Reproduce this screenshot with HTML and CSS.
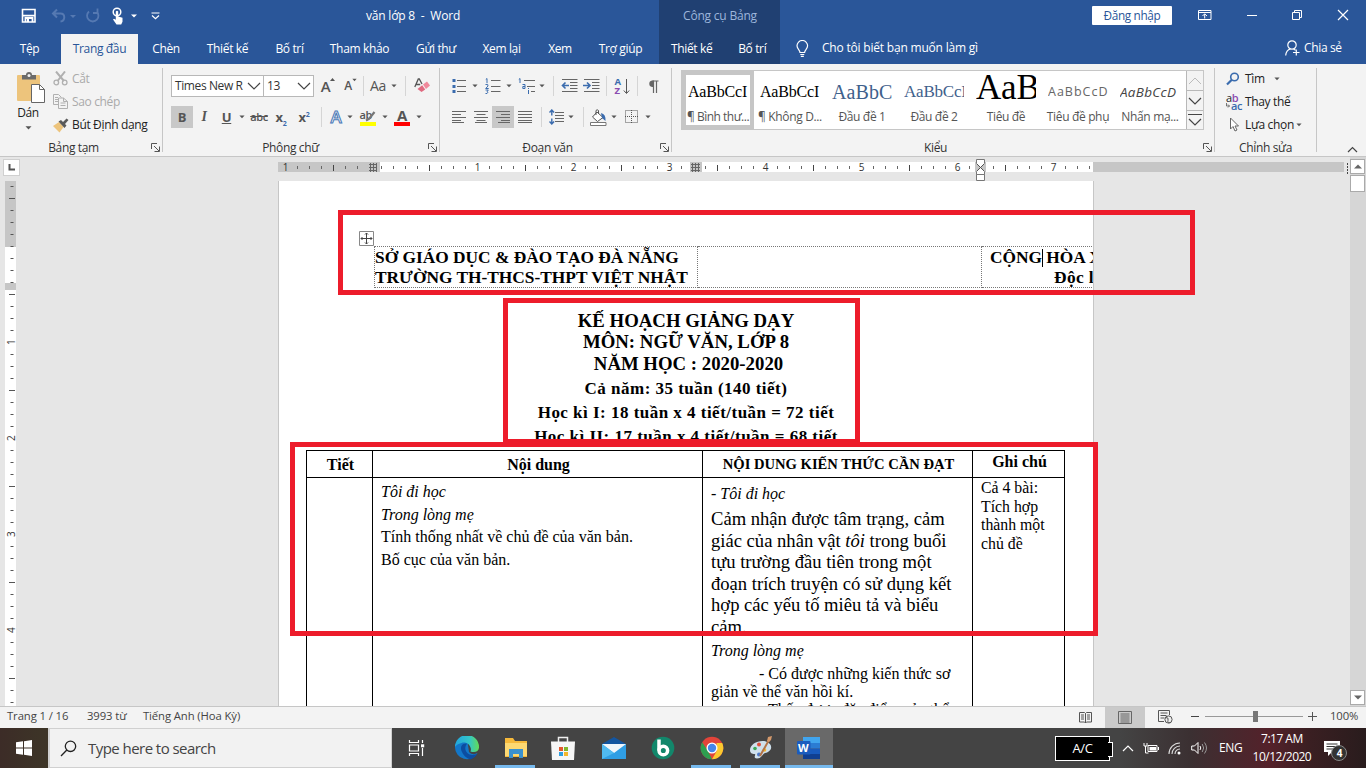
FILE: index.html
```html
<!DOCTYPE html>
<html lang="vi">
<head>
<meta charset="utf-8">
<title>văn lớp 8 - Word</title>
<link rel="stylesheet" href="styles.css">
</head>
<body>
<svg width="0" height="0" class="defs">
  <defs>
    <symbol id="dd" viewBox="0 0 7 4"><path d="M.5 .3h6L3.500 3.600z" fill="#555"/></symbol>
    <symbol id="launch" viewBox="0 0 9 9"><path d="M.5 6V.5H6M3 3l5 5M8.500 3.500v5h-5" fill="none" stroke="#555"/></symbol>
  </defs>
</svg>

<header class="titlebar">
  <div class="quick">
    <svg width="16" height="16" viewBox="0 0 16 16"><path d="M1.500 1.500h12.500v12.500H1.500z" fill="none" stroke="#fff" stroke-width="1.600"/><path d="M2 7.700h12M4.500 14v-4h7v4" fill="none" stroke="#fff" stroke-width="1.800"/><path d="M6 11h2v3H6z" fill="#fff"/></svg>
    <svg width="26" height="16" viewBox="0 0 26 16"><path d="M6 1.500L2 5.500l4 4M2.500 5.500h7c5 0 5 7.500 0 8" fill="none" stroke="#5579b2" stroke-width="2"/><path d="M19 7h6l-3 3z" fill="#5579b2"/></svg>
    <svg width="16" height="16" viewBox="0 0 16 16"><path d="M4 3.500A5.700 5.700 0 1 0 11.500 3.500M12.500 .5v4.500H8" fill="none" stroke="#5579b2" stroke-width="1.800"/></svg>
    <svg width="26" height="18" viewBox="0 0 26 18"><circle cx="6" cy="5" r="3.800" fill="none" stroke="#fff" stroke-width="1.500"/><path d="M4.800 4.500q1.200-1.500 2.400 0v5l4.300 1.300v4l-1.300 2.700H5.500L2 12.500l1-.8 1.800 1z" fill="#fff"/><path d="M20 7.500h6l-3 3z" fill="#fff"/></svg>
    <svg width="9" height="8" viewBox="0 0 9 8"><path d="M.5 1h8M1 3.500l3.500 3.300L8 3.500" fill="none" stroke="#fff" stroke-width="1.200"/></svg>
  </div>
  <div class="doc-title">văn lớp 8&nbsp; -&nbsp; Word</div>
  <div class="context-title">Công cụ Bảng</div>
  <div class="window-tools">
    <span class="login">Đăng nhập</span>
    <svg width="14" height="12" viewBox="0 0 14 12"><path d="M.5 1.500h12.500v9H.5zM.5 3.500h12.500M6.700 9.500V5M4.500 7l2.200-2.200L9 7" fill="none" stroke="#fff"/></svg>
    <svg width="12" height="12" viewBox="0 0 12 12"><path d="M1 6.500h10" stroke="#fff"/></svg>
    <svg width="12" height="12" viewBox="0 0 12 12"><path d="M1.500 3.500h7v7h-7zM3.500 3.500v-2h7v7h-2" fill="none" stroke="#fff"/></svg>
    <svg width="12" height="12" viewBox="0 0 12 12"><path d="M1 1l10 10M11 1L1 11" stroke="#fff" stroke-width="1.200"/></svg>
  </div>
</header>

<nav class="tabs">
  <a>Tệp</a><a class="active">Trang đầu</a><a>Chèn</a><a>Thiết kế</a><a>Bố trí</a><a>Tham khảo</a><a>Gửi thư</a><a>Xem lại</a><a>Xem</a><a>Trợ giúp</a>
  <span class="context-tabs"><a>Thiết kế</a><a>Bố trí</a></span>
  <span class="tell">
    <svg width="13" height="17" viewBox="0 0 13 17"><path d="M4 12.500C4 10 1 9 1 5.800a5.300 5.300 0 0 1 10.600 0C11.600 9 8.600 10 8.600 12.500zM4.300 14.500h4M4.800 16.400h3" fill="none" stroke="#fff" stroke-width="1.200"/></svg>
    Cho tôi biết bạn muốn làm gì</span>
  <span class="share">
    <svg width="15" height="16" viewBox="0 0 15 16"><circle cx="7" cy="5" r="4.200" fill="none" stroke="#fff" stroke-width="1.200"/><path d="M.7 15.500C1 11.500 3 9.500 5.500 9M8.500 9l2 1.200M8 12.500h6.500M11.300 9.500v6" fill="none" stroke="#fff" stroke-width="1.200"/></svg>
    Chia sẻ</span>
</nav>

<section class="ribbon">
  <div class="group clipboard">
    <div class="paste">
      <svg width="29" height="32" viewBox="0 0 29 32"><rect x="0" y="3" width="23" height="26" rx="1" fill="#edc47c"/><path d="M5 3h4a3 3 0 0 1 6 0h4v4.500H5z" fill="#6b6b6b"/><circle cx="12" cy="3.500" r="1.500" fill="#f3f3f3"/><path d="M14.500 12.500h8l5 5V30.500h-13z" fill="#fff" stroke="#666"/><path d="M22.500 12.500v5h5" fill="none" stroke="#666"/></svg>
      <span>Dán</span>
      <svg width="7" height="4"><use href="#dd"/></svg>
    </div>
    <ul class="clip-list">
      <li class="off"><svg width="16" height="15" viewBox="0 0 16 15"><path d="M3 .5l8 9.500M12 .5L4.500 10" stroke="#b0b0b0" stroke-width="2" fill="none"/><circle cx="3.300" cy="11.500" r="2.300" fill="none" stroke="#b0b0b0" stroke-width="1.300"/><circle cx="11.700" cy="11.500" r="2.300" fill="none" stroke="#b0b0b0" stroke-width="1.300"/></svg>Cắt</li>
      <li class="off"><svg width="16" height="15" viewBox="0 0 16 15"><path d="M5 10.500H.5v-10h5l3 3M2 3.500h3M2 5.500h3M2 7.500h3M5.500 4h5l4 3.500v7h-9zM10.500 4v3.500h4M7.500 9h5M7.500 11.500h5" fill="none" stroke="#b0b0b0"/></svg>Sao chép</li>
      <li><svg width="16" height="15" viewBox="0 0 16 15"><path d="M0 8l6-4 4.500 5-4 5.500z" fill="#edc47c"/><path d="M5.500 3.500L8 2l2 2 3.500-3.500L15.500 2 12 6l1.500 1.500-2 2.500z" fill="#5a5a5a"/></svg>Bút Định dạng</li>
    </ul>
    <footer>Bảng tạm</footer><svg class="launcher" width="9" height="9"><use href="#launch"/></svg>
  </div>

  <div class="group font">
    <div class="row row-a">
      <span class="combo face">Times New R<svg width="14" height="8" viewBox="0 0 14 8"><path d="M1 1l6 6 6-6" fill="none" stroke="#444" stroke-width="1.200"/></svg></span>
      <span class="combo size">13<svg width="14" height="8" viewBox="0 0 14 8"><path d="M1 1l6 6 6-6" fill="none" stroke="#444" stroke-width="1.200"/></svg></span>
      <span class="grow">A<svg width="5" height="4" viewBox="0 0 5 4"><path d="M0 3h5L2.500 0z" fill="#555"/></svg></span>
      <span class="shrink">A<svg width="5" height="4"><use href="#dd"/></svg></span>
      <i class="sep"></i>
      <span class="case">Aa</span><svg width="6" height="4"><use href="#dd"/></svg>
      <i class="sep"></i>
      <svg width="17" height="17" viewBox="0 0 17 17"><path d="M.8 9L4.300 1h1L8 6M2.200 6.500h4" fill="none" stroke="#555" stroke-width="1.300"/><path d="M9 6.500L13 3.500 16 7.500 12 11z" fill="#f0899b"/><path d="M8.200 7.200L11.200 11.500 7.500 14 3.500 11z" fill="#e06a80"/></svg>
    </div>
    <div class="row row-b">
      <b class="on">B</b><em>I</em><u>U</u><svg width="6" height="4"><use href="#dd"/></svg>
      <s>abc</s><b class="script">x<sub>2</sub></b><b class="script">x<sup>2</sup></b>
      <i class="sep"></i>
      <span class="effect">A</span><svg width="6" height="4"><use href="#dd"/></svg>
      <span class="mark">ab<svg width="16" height="16" viewBox="0 0 16 16"><path d="M14.500 2L9 9l-3 1.500" stroke="#777" stroke-width="2.200" fill="none"/><path d="M0 12h16v4H0z" fill="#ff0"/></svg></span><svg width="6" height="4"><use href="#dd"/></svg>
      <span class="color">A</span><svg width="6" height="4"><use href="#dd"/></svg>
    </div>
    <footer>Phông chữ</footer><svg class="launcher" width="9" height="9"><use href="#launch"/></svg>
  </div>

  <div class="group para">
    <div class="row row-a">
      <svg width="15" height="16" viewBox="0 0 15 16"><path d="M5 2.500h9M5 8.500h9M5 13.500h9" stroke="#666"/><path d="M.5 1h3v3h-3zM.5 7h3v3h-3zM.5 12h3v3h-3z" fill="#3b6cae"/></svg><svg width="6" height="4"><use href="#dd"/></svg>
      <svg width="16" height="16" viewBox="0 0 16 16"><path d="M6 2.500h9.500M6 8.500h9.500M6 13.500h9.500" stroke="#666"/><path d="M.8 1.500l1.200-1V5M.5 6.500Q3.500 5.500 3 8L.7 10.500h3M.5 12h2.800L2 13.500q2 .5 0 2H.5" fill="none" stroke="#3b6cae"/></svg><svg width="6" height="4"><use href="#dd"/></svg>
      <svg width="17" height="16" viewBox="0 0 17 16"><path d="M6 2.500h11M9 8.500h8M13 13.500h4" stroke="#666"/><path d="M.8 1.500l1.200-1V5M4.500 6.500H7v4H4.800v-2H7M10.500 12v4M10.500 10v1" fill="none" stroke="#3b6cae"/></svg><svg width="6" height="4"><use href="#dd"/></svg>
      <i class="sep"></i>
      <svg width="17" height="14" viewBox="0 0 17 14"><path d="M1 .5h15.500M9 3.500h7.500M9 6.500h7.500M9 9.500h7.500M1 12.500h15.500" stroke="#666"/><path d="M8 6.500H2M4.500 3.500L1.500 6.500l3 3" stroke="#3b6cae" stroke-width="1.600" fill="none"/></svg>
      <svg width="17" height="14" viewBox="0 0 17 14"><path d="M1 .5h15.500M9 3.500h7.500M9 6.500h7.500M9 9.500h7.500M1 12.500h15.500" stroke="#666"/><path d="M0 6.500h6M4 3.500l3 3-3 3" stroke="#3b6cae" stroke-width="1.600" fill="none"/></svg>
      <i class="sep"></i>
      <span class="sort"><span><b class="blue">A</b><b class="violet">Z</b></span><svg width="7" height="17" viewBox="0 0 7 17"><path d="M3.500 1v14M.8 12.500l2.700 3 2.700-3" fill="none" stroke="#555"/></svg></span>
      <i class="sep"></i>
      <svg width="11" height="13" viewBox="0 0 11 13"><path d="M10.500 1H4.500M5.500 1v12M8.500 1v12" stroke="#666" stroke-width="1.200"/><path d="M6 .5H4a3.300 3.300 0 0 0 0 6.500h2z" fill="#666"/></svg>
    </div>
    <div class="row row-b">
      <svg width="22" height="14" viewBox="0 0 22 14"><path d="M4 1.500h14M4 4.500h9M4 7.500h14M4 10.500h9M4 12.500h12" stroke="#666"/></svg>
      <svg width="22" height="14" viewBox="0 0 22 14"><path d="M4 1.500h14M6.500 4.500h9M4 7.500h14M6.500 10.500h9M5 12.500h12" stroke="#666"/></svg>
      <svg class="on" width="22" height="22" viewBox="0 -4 22 22"><path d="M4 1.500h14M9 4.500h9M4 7.500h14M9 10.500h9M6 12.500h12" stroke="#666"/></svg>
      <svg width="22" height="14" viewBox="0 0 22 14"><path d="M4 1.500h14M4 4.500h14M4 7.500h14M4 10.500h14M4 12.500h14" stroke="#666"/></svg>
      <i class="sep"></i>
      <svg width="15" height="16" viewBox="0 0 15 16"><path d="M6 3.500h9M6 6.500h9M6 9.500h9M6 12.500h9" stroke="#666"/><path d="M2.800 6.500V1M.5 3.500L2.800 1l2.300 2.500M2.800 9.500V15M.5 12.500L2.800 15l2.300-2.500" fill="none" stroke="#3b6cae" stroke-width="1.400"/></svg><svg width="6" height="4"><use href="#dd"/></svg>
      <i class="sep"></i>
      <svg width="17" height="17" viewBox="0 0 17 17"><path d="M7 3l6 5.500-5.500 4L2.500 8zM6 6V1.500Q7 0 8.500 1.500V5" fill="#fff" stroke="#555"/><path d="M11 4q5 1 4.500 8L12 9z" fill="#3b6cae"/><path d="M.5 13.500h15.500v3H.5z" fill="#fff" stroke="#777"/></svg><svg width="6" height="4"><use href="#dd"/></svg>
      <svg width="14" height="14" viewBox="0 0 14 14"><path d="M.5 .5h12v12H.5zM6.500 0v13M0 6.500h13" fill="none" stroke="#555" stroke-dasharray="1 1"/></svg><svg width="6" height="4"><use href="#dd"/></svg>
    </div>
    <footer>Đoạn văn</footer><svg class="launcher" width="9" height="9"><use href="#launch"/></svg>
  </div>

  <div class="group styles">
    <div class="gallery">
      <div class="style picked"><p>AaBbCcI</p><span>¶ Bình thư...</span></div>
      <div class="style"><p>AaBbCcI</p><span>¶ Không D...</span></div>
      <div class="style h1"><p>AaBbC</p><span>Đầu đề 1</span></div>
      <div class="style h2"><p>AaBbCcI</p><span>Đầu đề 2</span></div>
      <div class="style title"><p>AaB</p><span>Tiêu đề</span></div>
      <div class="style subtitle"><p>AaBbCcD</p><span>Tiêu đề phụ</span></div>
      <div class="style emph"><p>AaBbCcD</p><span>Nhấn mạ...</span></div>
      <div class="scroller">
        <span><svg width="14" height="8" viewBox="0 0 14 8"><path d="M1 7l6-6 6 6" fill="none" stroke="#bbb"/></svg></span>
        <span><svg width="14" height="8" viewBox="0 0 14 8"><path d="M1 1l6 6 6-6" fill="none" stroke="#444" stroke-width="1.200"/></svg></span>
        <span><svg width="14" height="14" viewBox="0 0 14 14"><path d="M0 1.500h14M1 6l6 6 6-6" fill="none" stroke="#444" stroke-width="1.200"/></svg></span>
      </div>
    </div>
    <footer>Kiểu</footer><svg class="launcher" width="9" height="9"><use href="#launch"/></svg>
  </div>

  <div class="group edit">
    <ul>
      <li><svg width="14" height="14" viewBox="0 0 14 14"><circle cx="8.500" cy="5" r="3.800" fill="none" stroke="#3b6cae" stroke-width="1.600"/><path d="M5.800 7.800L1 12.500" stroke="#3b6cae" stroke-width="2.200"/></svg><span class="find">Tìm</span><svg width="6" height="4"><use href="#dd"/></svg></li>
      <li class="replace"><span class="abac"><span>a<b class="violet">b</b></span><span class="under"><svg width="4" height="5" viewBox="0 0 4 5"><path d="M.5 0v3h3M2 1.500L3.500 3 2 4.500" fill="none" stroke="#555" stroke-width=".8"/></svg><b class="blue">ac</b></span></span><span>Thay thế</span></li>
      <li class="select"><svg width="14" height="15" viewBox="0 0 14 15"><path d="M4.500 1v11l2.500-2.500 2 4.500 2-1-2-4h3.500z" fill="#fff" stroke="#666"/></svg><span>Lựa chọn</span><svg width="6" height="4"><use href="#dd"/></svg></li>
    </ul>
    <footer>Chỉnh sửa</footer>
  </div>
  <svg class="collapse" width="11" height="7" viewBox="0 0 11 7"><path d="M1 6l4.500-4.500L10 6" fill="none" stroke="#444" stroke-width="1.200"/></svg>
</section>

<main class="workspace">
  <aside class="left-rail">
    <div class="corner"><svg width="7" height="7" viewBox="0 0 7 7"><path d="M1.500 0v5.500H7" fill="none" stroke="#555" stroke-width="2"/></svg></div>
    <svg class="vruler" width="11" height="525" viewBox="5 181 11 525">
      <path d="M5 181h11v525H5z" fill="#fff"/><path d="M5 181h11v66H5zM5 283h11v7H5z" fill="#c6c6c6"/>
      <g stroke="#555">
        <path d="M12 181v525" stroke-width="3" stroke-dasharray="1 11" stroke-dashoffset="-5"/>
        <path d="M9 198.500h6M9 294.500h6M9 390.500h6M9 486.500h6M9 582.500h6M9 678.500h6"/>
      </g>
      <g fill="#fff"><path d="M8 336h7v12H8zM8 432h7v12H8zM8 528h7v12H8zM8 624h7v12H8z"/></g>
      <g class="rule-num"><text transform="translate(15 345) rotate(-90)">1</text><text transform="translate(15 441) rotate(-90)">2</text><text transform="translate(15 537) rotate(-90)">3</text><text transform="translate(15 633) rotate(-90)">4</text></g>
    </svg>
  </aside>

  <div class="canvas">
    <svg class="hruler" width="1070" height="24" viewBox="278 157 1070 24">
      <path d="M278 162h1066v10H278z" fill="#c6c6c6"/><path d="M380 162h713v10H380z" fill="#fff"/>
      <path d="M297 167.500h796" stroke="#666" stroke-width="3" stroke-dasharray="1 11"/>
      <path d="M333.500 165v6M429.500 165v6M525.500 165v6M621.500 165v6M717.500 165v6M813.500 165v6M909.500 165v6M1005.500 165v6" stroke="#444"/>
      <g fill="#fff"><path d="M471 163h12v8h-12zM567 163h12v8h-12zM663 163h12v8h-12zM759 163h12v8h-12zM855 163h12v8h-12zM951 163h12v8h-12zM1047 163h12v8h-12z"/></g>
      <g class="rule-num"><text x="285.500" y="171">1</text><text x="477.500" y="171">1</text><text x="573.500" y="171">2</text><text x="669.500" y="171">3</text><text x="765.500" y="171">4</text><text x="861.500" y="171">5</text><text x="957.500" y="171">6</text><text x="1053.500" y="171">7</text></g>
      <path d="M368 162h12v10h-12zM690 162h12v10h-12zM975 162h11v10h-11z" fill="#c6c6c6"/>
      <path d="M369 164.500h8M369 167.500h8M369 170.500h8M370.500 163v9M373.500 163v9M376.500 163v9M691 164.500h9M691 167.500h9M691 170.500h9M692.500 163v9M695.500 163v9M698.500 163v9" stroke="#666"/>
      <path d="M976.500 159.500h8v4l-4 4-4-4zM976.500 174.500v-3l4-4 4 4v3zM976.500 174.500h8v6h-8z" fill="#fff" stroke="#777"/>
      <path d="M977 164l7 7M984 164l-7 7" stroke="#555"/>
      <path d="M1347.500 163v12" stroke="#444" stroke-width="1" stroke-dasharray="2 1"/>
    </svg>

    <article class="page">
      <table class="letterhead">
        <tr><td>SỞ GIÁO DỤC &amp; ĐÀO TẠO ĐÀ NẴNG<br>TRƯỜNG TH-THCS-THPT VIỆT NHẬT</td><td></td><td><p class="nation">CỘNG<i class="caret"></i> HÒA XÃ</p><p class="motto">Độc lập</p></td></tr>
      </table>
      <div class="headings">
        <h1>KẾ HOẠCH GIẢNG DẠY</h1>
        <h1 class="subject">MÔN: NGỮ VĂN, LỚP 8</h1>
        <h1 class="year">NĂM HỌC : 2020-2020</h1>
        <h2 class="total">Cả năm: 35 tuần (140 tiết)</h2>
        <h2>Học kì I: 18 tuần x 4 tiết/tuần = 72 tiết</h2>
        <h2 class="term2">Học kì II: 17 tuần x 4 tiết/tuần = 68 tiết</h2>
      </div>
      <div class="plan">
        <div class="th t1">Tiết</div><div class="th t2">Nội dung</div><div class="th t3">NỘI DUNG KIẾN THỨC CẦN ĐẠT</div><div class="th t4">Ghi chú</div>
        <div></div>
        <div class="lessons"><p><em>Tôi đi học</em></p><p><em>Trong lòng mẹ</em></p><p>Tính thống nhất về chủ đề của văn bản.</p><p>Bố cục của văn bản.</p></div>
        <div class="goals"><p class="lead">- <em>Tôi đi học</em></p>
          <p class="big">Cảm nhận được tâm trạng, cảm<br>giác của nhân vật <em>tôi</em> trong buổi<br>tựu trường đầu tiên trong một<br>đoạn trích truyện có sử dụng kết<br>hợp các yếu tố miêu tả và biểu<br>cảm.</p></div>
        <div class="notes">Cả 4 bài:<br>Tích hợp<br>thành một<br>chủ đề</div>
        <div></div><div></div>
        <div class="goals more"><p><em>Trong lòng mẹ</em></p><p class="indent">- Có được những kiến thức sơ</p><p>giản về thể văn hồi kí.</p><p class="indent">- Thấy được đặc điểm của thể</p></div>
        <div></div>
      </div>
      <svg class="handle" width="15" height="15" viewBox="0 0 15 15"><path d="M.5 .5h14v14H.5z" fill="#fff" stroke="#888"/><path d="M7.500 2v11M2 7.500h11M6 3.500l1.500-1.500L9 3.500M6 11.500L7.500 13 9 11.500M3.500 6L2 7.500 3.500 9M11.500 6L13 7.500 11.500 9" fill="none" stroke="#444"/></svg>
    </article>
    <i class="frame f1"></i><i class="frame f2"></i><i class="frame f3"></i>
  </div>

  <aside class="scrollbar">
    <span class="arrow"><svg width="8" height="5" viewBox="0 0 8 5"><path d="M0 4.500h8L4 .5z" fill="#666"/></svg></span>
    <span class="thumb"></span>
    <span class="arrow end"><svg width="8" height="5" viewBox="0 0 8 5"><path d="M0 .5h8L4 4.500z" fill="#666"/></svg></span>
  </aside>
</main>

<footer class="status">
  <span class="pages">Trang 1 / 16</span><span class="words">3993 từ</span><span class="lang">Tiếng Anh (Hoa Kỳ)</span>
  <span class="view"><svg width="13" height="13" viewBox="0 0 13 13"><path d="M.5 1.500h5l1 1 1-1h5v9.500h-5l-1 1-1-1h-5zM6.500 2.500V12M2 4h3M2 6h3M2 8h3M8 4h3M8 6h3M8 8h3" fill="none" stroke="#555"/></svg></span>
  <span class="view current"><svg width="14" height="13" viewBox="0 0 14 13"><path d="M.5 .5h13v12H.5zM2.500 3h9M2.500 5h9M2.500 7h9M2.500 9h9M2.500 11h9" fill="none" stroke="#666"/></svg></span>
  <span class="view"><svg width="15" height="14" viewBox="0 0 15 14"><path d="M6 11.500H.5V.5h11V5M2.500 3h7M2.500 5.500h6M2.500 8h4" fill="none" stroke="#555"/><circle cx="10.500" cy="9.500" r="3.600" fill="#eee" stroke="#555"/><path d="M8 7.500q3 0 2 3t3 2" fill="none" stroke="#555"/></svg></span>
  <span class="minus"></span><span class="track"><i></i></span><svg class="plus" width="9" height="9" viewBox="0 0 9 9"><path d="M0 4.500h9M4.500 0v9" stroke="#555"/></svg><span class="zoom">100%</span>
</footer>

<footer class="taskbar">
  <span class="start"><svg width="16" height="16" viewBox="0 0 16 16"><path d="M0 2.300l7-1v6.200H0zM8 1.200L16 0v7.500H8zM0 8.500h7v6.200l-7-1zM8 8.500h8V16l-8-1.200z" fill="#fff"/></svg></span>
  <span class="search"><svg width="17" height="17" viewBox="0 0 17 17"><circle cx="10.500" cy="6.300" r="5.200" fill="none" stroke="#222" stroke-width="1.300"/><path d="M6.800 10L1 16" stroke="#222" stroke-width="1.300"/></svg>Type here to search</span>
  <div class="apps">
    <span><svg width="17" height="16" viewBox="0 0 17 16"><path d="M1.500 0v2.500h9V0M1.500 16v-2.500h9V16M1.500 5h9v6h-9zM14.500 0v3M14.500 8v8" fill="none" stroke="#fff" stroke-width="1.200"/><path d="M13 4.300h3.200v3H13z" fill="#fff"/></svg></span>
    <span class="edge"><svg width="24" height="24" viewBox="0 0 24 24"><defs><linearGradient id="eg" x1="0" x2="1"><stop offset="0" stop-color="#22a5dd"/><stop offset=".6" stop-color="#33c6c8"/><stop offset="1" stop-color="#63dc55"/></linearGradient></defs><path d="M0 11C0 5 6 2 12 2l2 14c3 3 6 2.500 8.500 1A12 12 0 0 1 0 11z" fill="#1377c9"/><path d="M0 11A12 12 0 0 1 24 11c.3 4.500-4 6-8.500 4.500 0-1 1-1.500 0-4-1-4-6-6-9-4.500C3 8 .5 9.500 0 11z" fill="url(#eg)"/><path d="M12 7.500c-5-.5-7 3-5.500 7.500 1.500 4 4.500 7 8.500 8.500 3.500-1 6.500-3.500 7.500-6-4 2.500-9 1.500-11-1.500-1.800-2.500-1.700-5.500.5-8.500z" fill="#0c4da0"/></svg></span>
    <span class="run"><svg width="24" height="22" viewBox="0 0 24 22"><path d="M1 1h8l2 3h12v16H1z" fill="#f6b93b"/><path d="M1 6h22v13H1z" fill="#fdd872"/><path d="M5 12h14v9h-4v-4H9v4H5z" fill="#3a91cf"/></svg></span>
    <span><svg width="24" height="24" viewBox="0 0 24 24"><path d="M7.500 6V1.500h9V6" fill="none" stroke="#eee" stroke-width="1.500"/><path d="M0 5.500h24L23 24H1z" fill="#f6f6f6"/><path d="M8 11h4v4H8z" fill="#e2572c"/><path d="M13 11h4v4h-4z" fill="#7fb52c"/><path d="M8 16h4v4H8z" fill="#2f9fe0"/><path d="M13 16h4v4h-4z" fill="#f4b72c"/></svg></span>
    <span class="mail"><svg width="26" height="22" viewBox="0 0 26 22"><path d="M1 7L13 0l12 7v3H1z" fill="#1456a0"/><path d="M1 7h24v15H1z" fill="#2f9ee4"/><path d="M1 7h24L13 16z" fill="#f1f6fa"/><path d="M1 7l12 9L1 22z" fill="#50baf0"/></svg></span>
    <span class="bing"><svg width="24" height="24" viewBox="0 0 24 24"><circle cx="12" cy="12" r="11.300" fill="#12876b"/><path d="M8 3.500v11" fill="none" stroke="#fff" stroke-width="3.500"/><circle cx="12.300" cy="14.500" r="4.300" fill="none" stroke="#fff" stroke-width="3.500"/></svg></span>
    <span class="run chrome"><svg width="24" height="24" viewBox="0 0 24 24"><circle cx="12" cy="12" r="11.300" fill="#e2443a"/><path d="M2.200 6.300L8 15l4 8.300A11.300 11.300 0 0 1 2.200 6.300z" fill="#2d9f50"/><path d="M12 23.300L17 14.500 16.500 7h5.700A11.300 11.300 0 0 1 12 23.300z" fill="#fbc92f"/><circle cx="12" cy="12" r="5.500" fill="#fff"/><circle cx="12" cy="12" r="4.200" fill="#4686ea"/></svg></span>
    <span class="run chrome"><svg width="24" height="24" viewBox="0 0 24 24"><path d="M1 14C1 8 10 3.500 17 5.500c8 3 6 10-1 11.500-3 1-3 5.500-8 5.500S8 18 5.500 18s-4.500-1-4.500-4z" fill="#cfe0ec"/><circle cx="6" cy="12.500" r="1.800" fill="#3aa757"/><circle cx="10" cy="8.500" r="2" fill="#e0503c"/><circle cx="15.500" cy="14" r="1.800" fill="#f4b72c"/><circle cx="10" cy="18.500" r="2" fill="#4b78c9"/><path d="M11 20L20 4" stroke="#b37448" stroke-width="2"/><path d="M18 5l1-4 4-1-1 4-2 2z" fill="#d59a6c"/></svg></span>
    <span class="run focus"><svg width="24" height="24" viewBox="0 0 24 24"><path d="M6 1h17v6H6z" fill="#41a5ee"/><path d="M6 7h17v5.500H6z" fill="#2b7cd3"/><path d="M6 12.500h17V18H6z" fill="#185abd"/><path d="M6 18h17v5H6z" fill="#103f91"/><rect y="5" width="13.500" height="13.500" rx="1" fill="#1b5cbe"/><text class="w" x="1" y="15.500">W</text></svg></span>
  </div>
  <div class="tray">
    <span class="ac">A/C</span>
    <svg width="12" height="8" viewBox="0 0 12 8"><path d="M1 7l5-5 5 5" fill="none" stroke="#fff" stroke-width="1.200"/></svg>
    <svg width="16" height="12" viewBox="0 0 16 12"><path d="M5 3.500h9v6H5zM2.500 6v5h3M1 1v3h3V1M2.500 4v2" fill="none" stroke="#fff"/><path d="M6.500 5H13v3.500H6.500zM15 5h1v3h-1z" fill="#fff"/></svg>
    <svg width="14" height="13" viewBox="0 0 14 13"><path d="M1 12A11 11 0 0 1 12 1M4 12a8 8 0 0 1 8-8M7 12a5 5 0 0 1 5-5" fill="none" stroke="#ddd" stroke-width="1.100"/><circle cx="11" cy="11" r="1.500" fill="#fff"/></svg>
    <svg width="17" height="14" viewBox="0 0 17 14"><path d="M.7 5h2.800L7 1.500v11L3.500 9H.7zM9 5q1.500 2 0 4" fill="none" stroke="#fff"/><path d="M11.200 3q3 4 0 8M13.500 1.500q4 5.500 0 11" fill="none" stroke="#999"/></svg>
    <span class="eng">ENG</span>
    <span class="clock">7:17 AM<br>10/12/2020</span>
    <span class="notice"><svg width="16" height="16" viewBox="0 0 16 16"><path d="M0 1h16v11H8l-4 4v-4H0z" fill="#fff"/><path d="M2.500 4h11M2.500 6.500h11M2.500 9h7" stroke="#333"/></svg><b>4</b></span>
  </div>
</footer>
</body>
</html>
```

FILE: styles.css
```css
* { box-sizing: border-box; }
body { margin: 0; width: 1366px; height: 768px; overflow: hidden; display: flex; flex-direction: column; font: 12px/16px "Open Sans", "Noto Sans", sans-serif; letter-spacing: -.35px; color: #333; background: #e6e6e6; }
p, ul, h1, h2 { margin: 0; padding: 0; }
ul { list-style: none; }
svg { display: block; flex: none; }
.defs { position: absolute; }

.titlebar { height: 32px; flex: none; display: flex; align-items: stretch; background: #2a5699; color: #fff; }
.quick { width: 340px; padding-left: 21px; display: flex; align-items: center; gap: 12px; }
.quick svg:nth-child(2) { margin-left: 2px; }
.quick svg:nth-child(3) { margin-left: -4px; }
.quick svg:nth-child(4) { margin-left: -2px; }
.quick svg:nth-child(5) { margin-left: 2px; }
.doc-title { width: 319px; padding-left: 26px; line-height: 32px; white-space: nowrap; letter-spacing: -.2px; }
.context-title { width: 121px; padding-left: 1px; background: #204072; color: #9db6dc; text-align: center; line-height: 32px; letter-spacing: -.2px; }
.window-tools { flex: 1; display: flex; align-items: center; padding: 0 17px 2px 312px; justify-content: space-between; }
.login { width: 80px; height: 19px; border-radius: 1px; background: #fff; color: #2a5699; text-align: center; line-height: 19px; font-size: 11.800px; margin-right: -8px; }

.tabs { height: 32px; flex: none; display: flex; background: #2a5699; color: #fff; }
.tabs a { line-height: 33px; text-align: center; white-space: nowrap; }
.tabs a:nth-child(1) { width: 61px; padding-right: 2px; }
.tabs a.active { width: 77px; margin-top: 2px; line-height: 30px; background: #f3f3f3; color: #2a5699; }
.tabs a:nth-child(3) { width: 56px; }
.tabs a:nth-child(4) { width: 67px; }
.tabs a:nth-child(5) { width: 57px; }
.tabs a:nth-child(6) { width: 83px; }
.tabs a:nth-child(7) { width: 70px; }
.tabs a:nth-child(8) { width: 61px; }
.tabs a:nth-child(9) { width: 56px; }
.tabs a:nth-child(10) { width: 65px; }
.context-tabs { width: 121px; margin-left: 6px; display: flex; background: #204072; }
.tabs .context-tabs a:nth-child(1) { width: 66px; padding-right: 0; }
.tabs .context-tabs a:nth-child(2) { width: 56px; }
.tell, .share { display: flex; align-items: center; white-space: nowrap; }
.tell { width: 500px; padding-left: 16px; gap: 13px; letter-spacing: -.2px; }
.share { padding-left: 5px; gap: 4px; }

.ribbon { height: 93px; flex: none; display: flex; background: #f3f3f3; border-bottom: 1px solid #c6c6c6; }
.group { position: relative; height: 92px; flex: none; padding-top: 11px; background: linear-gradient(#c6c6c6, #c6c6c6) right 4px / 1px 84px no-repeat; }
.ribbon .group > footer { position: absolute; left: 0; right: 16px; bottom: 0; text-align: center; color: #333; }
.ribbon .para > footer { right: 17px; }
.ribbon .edit > footer { right: 1px; }
.ribbon .font > footer { right: 22px; }
.launcher { position: absolute; right: 3px; bottom: 4px; }
.clipboard { width: 163px; }
.font { width: 277px; }
.para { width: 232px; }
.styles { width: 543px; }
.edit { width: 102px; }
.clipboard { display: flex; padding-top: 0; }
.font > footer { padding-left: 0; }
.paste { width: 48px; padding: 8px 0 0 8px; display: flex; flex-direction: column; align-items: center; }
.paste > svg:first-child { margin-left: 6px; }
.paste span { color: #222; margin: 1px 0 5px; }
.clip-list { padding-top: 3px; }
.clip-list li { height: 23.300px; display: flex; align-items: center; gap: 3px; padding-left: 5px; color: #222; white-space: nowrap; }
.clip-list .off { color: #aaa; }

.row { display: grid; align-items: center; justify-items: center; height: 22px; color: #555; }
.row-b { margin-top: 9px; }
.font .row { padding-left: 8px; }
.font .row-a { grid-template-columns: 93px 50px 28px 17px 8px 22px 10px 12px 22px; }
.font .row-b { grid-template-columns: 22px 22px 23px 7px 28px 16px 30px 5px 24px 3px 33px 2px 32px 2px; }
.para .row-a { padding-left: 11px; grid-template-columns: 16px 16px 19px 14px 20px 11px 12px 20px 24px 6px 26px 4px 28px; }
.para .row-b { padding-left: 8px; grid-template-columns: 22px 22px 22px 22px 10px 20px 10px 14px 16px 16px 19px 14px; }
.sep { width: 1px; height: 20px; background: #d5d5d5; }
.combo { width: 100%; height: 22px; border: 1px solid #b8b8b8; background: #fff; color: #333; display: flex; align-items: center; justify-content: space-between; padding: 0 3px; white-space: nowrap; }
.combo.size { border-left-width: 0; padding-right: 2px; }
.combo.face { letter-spacing: -.4px; padding-right: 2px; }
.grow, .shrink { display: flex; align-items: flex-start; font-size: 15px; font-weight: 600; }
.shrink { font-size: 12px; }
.case { font-size: 14px; }
.row-b > .on { width: 22px; height: 22px; background: #c8c8c8; text-align: center; line-height: 22px; font-size: 13px; }
.para .row-b > .on { background: #c8c8c8; }
.row-b > em { font: italic bold 14px "Liberation Serif", serif; }
.row-b > u { font-size: 13px; font-weight: 700; }
.row-b > s { font-size: 11px; font-weight: 600; }
.script { font-size: 13px; line-height: 16px; }
.script sub, .script sup { font-size: 7px; line-height: 0; color: #3b6cae; }
.effect { font-size: 17px; font-weight: 600; color: #f3f3f3; -webkit-text-stroke: 1px #4878b8; }
.mark { position: relative; width: 16px; height: 17px; font-size: 11px; line-height: 11px; font-weight: 600; }
.mark svg { position: absolute; left: 0; top: 1px; }
.color { width: 16px; height: 17px; font-size: 15px; line-height: 13px; font-weight: 700; text-align: center; border-bottom: 4px solid #f00; }
.sort { display: flex; align-items: center; gap: 2px; font-size: 9.500px; line-height: 9px; }
.sort b { display: block; }

.ribbon .styles { padding: 6px 0 0 9px; }
.gallery { width: 523px; height: 60px; display: flex; border: 1px solid #c6c6c6; background: #fff; }
.style { width: 72px; flex: none; text-align: center; overflow: hidden; color: #555; white-space: nowrap; }
.style p { height: 38px; color: #000; font: 16px/42px "Liberation Serif", serif; letter-spacing: -.2px; padding: 0; margin: 0 6px; overflow: hidden; display: flex; }
.picked { box-shadow: inset 0 0 0 4px #c6c6c6; }
.picked span { letter-spacing: -.5px; }
.style.h1 p { font-size: 20px; color: #3f618c; letter-spacing: .1px; }
.style.h2 p { font-size: 17px; color: #3f618c; letter-spacing: -.2px; }
.style.title p { font-size: 35px; line-height: 33px; letter-spacing: -.2px; }
.style.subtitle p { font: 12.500px/42px "Open Sans", sans-serif; color: #666; letter-spacing: 1px; }
.style.emph p { font: italic 13.500px/42px "Open Sans", sans-serif; color: #444; letter-spacing: .3px; margin-right: 4px; }
.style > span { display: block; }
.scroller { width: 17px; flex: none; display: grid; grid-template-rows: 20px 20px 18px; }
.scroller span { display: grid; place-items: center; background: #f3f3f3; border: solid #b8b8b8; border-width: 0 0 1px 1px; }
.scroller span:last-child { border-bottom: 0; }
.edit ul { padding-left: 11px; margin-top: -8px; }
.edit li { height: 23px; display: flex; align-items: center; gap: 5px; color: #222; white-space: nowrap; }
.edit .find { margin-right: 4px; }
.edit .replace { gap: 3px; }
.edit .select { gap: 5px; }
.edit .select svg:last-child { margin-left: -3px; }
.abac { width: 16px; font-size: 11px; line-height: 8px; letter-spacing: -.4px; display: flex; flex-direction: column; }
.abac b { font-weight: 600; }
.under { display: flex; align-items: center; gap: 1px; }
.violet { color: #8a4bb0; }
.blue { color: #3b6cae; }
.collapse { margin: 82px 0 0 30px; }

.workspace { height: 549px; flex: none; display: flex; background: #e6e6e6; overflow: hidden; }
.left-rail { width: 278px; flex: none; }
.corner { width: 17px; height: 17px; margin: 2px 0 5px 3px; background: #fff; border: 1px solid #d0d0d0; display: grid; place-items: center; }
.vruler { margin-left: 5px; }
.rule-num text { font: 10px "Open Sans", sans-serif; fill: #333; text-anchor: middle; letter-spacing: 0; }
.vruler .rule-num text { text-anchor: start; }
.canvas { position: relative; width: 1072px; }
.page { position: relative; width: 816px; height: 525px; padding-top: 65px; background: #fff; border: solid #c6c6c6; border-width: 0 1px; overflow: hidden; color: #000; font-family: "Liberation Serif", serif; letter-spacing: 0; }
.handle { position: absolute; left: 80px; top: 50px; }
.letterhead { width: 1000px; margin-left: 95px; table-layout: fixed; border-collapse: collapse; font: bold 17.350px/20px "Liberation Serif", serif; }
.letterhead tr { height: 41px; }
.letterhead td { height: 41px; padding: 1px 0 0; border: 1px dotted #777; vertical-align: top; white-space: nowrap; line-height: 19.500px; }
.letterhead td:nth-child(1) { width: 323px; }
.letterhead td:nth-child(2) { width: 284px; }
.nation { padding-left: 8px; }
.motto { padding-left: 72px; letter-spacing: .4px; }
.caret { display: inline-block; width: 1px; height: 18px; margin-right: -1px; background: #000; vertical-align: -4px; }
.headings { height: 152px; padding-top: 22px; overflow: hidden; text-align: center; white-space: nowrap; }
.headings h1 { font-size: 18.800px; line-height: 21px; }
.headings .subject, .headings .year { line-height: 22px; }
.headings .year { padding-left: 5px; margin-bottom: 2px; }
.headings h2 { font-size: 17px; line-height: 24px; letter-spacing: .48px; }
.plan { width: 759px; margin: 10px 0 0 27px; display: grid; grid-template-columns: 66px 330px 270px 92px; grid-template-rows: 27px 158px 80px; border-left: 1px solid #000; border-top: 1px solid #000; font-size: 16px; white-space: nowrap; }
.plan > div { border-right: 1px solid #000; overflow: hidden; }
.plan > .th { border-bottom: 1px solid #000; text-align: center; font-weight: 700; line-height: 28px; padding-left: 2px; }
.plan > .t3 { font-size: 14.600px; line-height: 26px; }
.plan > .t4 { line-height: 21px; }
.lessons { padding: 3px 0 0 8px; line-height: 22.700px; }
.goals { padding: 5px 0 0 8px; }
.lead { line-height: 22px; height: 25px; }
.big { font-size: 18.600px; line-height: 21.600px; }
.notes { padding: 1px 0 0 8px; font-size: 15.800px; line-height: 18.700px; }
.more { line-height: 18px; padding-top: 6px; }
.more p:first-child { height: 23px; }
.indent { padding-left: 48px; }
.frame { position: absolute; border: 5px solid #ed1c2b; }
.f1 { left: 60px; top: 53px; width: 857px; height: 85px; }
.f2 { left: 225px; top: 141px; width: 357px; height: 146px; }
.f3 { left: 12px; top: 285px; width: 808px; height: 194px; }
.scrollbar { width: 16px; background: #d6d6d6; display: flex; flex-direction: column; padding: 2px 1px 1px 0; }
.arrow, .thumb { width: 15px; height: 15px; flex: none; border: 1px solid #aaa; background: #fff; display: grid; place-items: center; }
.thumb { height: 17px; margin-top: 1px; }
.arrow.end { margin-top: auto; }

.status { height: 22px; flex: none; display: flex; align-items: center; background: #f3f3f3; border-top: 1px solid #c6c6c6; font-size: 11.300px; color: #444; white-space: nowrap; letter-spacing: -.1px; padding-bottom: 3px; }
.pages { width: 87px; padding-left: 7px; }
.words { width: 56px; }
.lang { width: 922px; }
.view { width: 40px; height: 21px; display: grid; place-items: center; margin-bottom: -3px; padding-bottom: 1px; }
.current { background: #cacaca; }
.minus { width: 8px; height: 1px; background: #444; margin-left: 6px; }
.track { width: 98px; height: 1px; margin-left: 6px; background: #999; position: relative; }
.track i { position: absolute; left: 48px; top: -5px; width: 5px; height: 11px; background: #777; }
.plus { margin: 0 13px 0 5px; }

.taskbar { height: 40px; flex: none; display: flex; color: #fff; background: linear-gradient(90deg, #444 0, #444 1120px, #3b3032 1190px, #54212a 1270px, #3a1f22 1310px, #291c1d 1366px); }
.start { width: 48px; display: grid; place-items: center; background: linear-gradient(90deg, #3c2c27, #3d3527); }
.search { width: 344px; border: 1px solid #d0d0d0; border-left-width: 2px; background: #f2f2f2; color: #444; display: flex; align-items: center; gap: 11px; padding-left: 10px; font-size: 15px; letter-spacing: -.55px; }
.apps { display: flex; width: 663px; }
.apps > span { width: 49px; display: grid; place-items: center; }
.apps > span:first-child { width: 48px; }
.edge, .mail, .bing, .chrome { padding-left: 4px; }
.apps .run { background: linear-gradient(#76b9ed, #76b9ed) 6px bottom / 40px 3px no-repeat; }
.apps .run:not(.focus) { padding-left: 4px; }
.apps .run.focus { width: 48px; background: linear-gradient(#76b9ed, #76b9ed) 0 37px / 48px 3px no-repeat #696969; margin-left: 2px; }
.w { font: bold 11px "Open Sans", sans-serif; fill: #fff; }
.tray { display: flex; align-items: center; flex: 1; gap: 9px; white-space: nowrap; }
.ac { position: relative; width: 55px; height: 25px; border: 1px solid #fff; background: #000; text-align: center; line-height: 23px; font-size: 13px; margin-right: 3px; }
.ac::after { content: ""; position: absolute; right: -4px; top: 5px; width: 4px; height: 13px; background: #000; border: 1px solid #fff; border-left: 0; }
.eng { margin-left: 2px; }
.clock { width: 61px; text-align: center; line-height: 18px; letter-spacing: -.5px; }
.notice { position: relative; margin-left: 3px; }
.notice b { position: absolute; left: 7px; top: 5px; width: 16px; height: 16px; border: 1px solid #888; border-radius: 50%; background: #333; font-size: 10px; line-height: 14px; text-align: center; }
```
